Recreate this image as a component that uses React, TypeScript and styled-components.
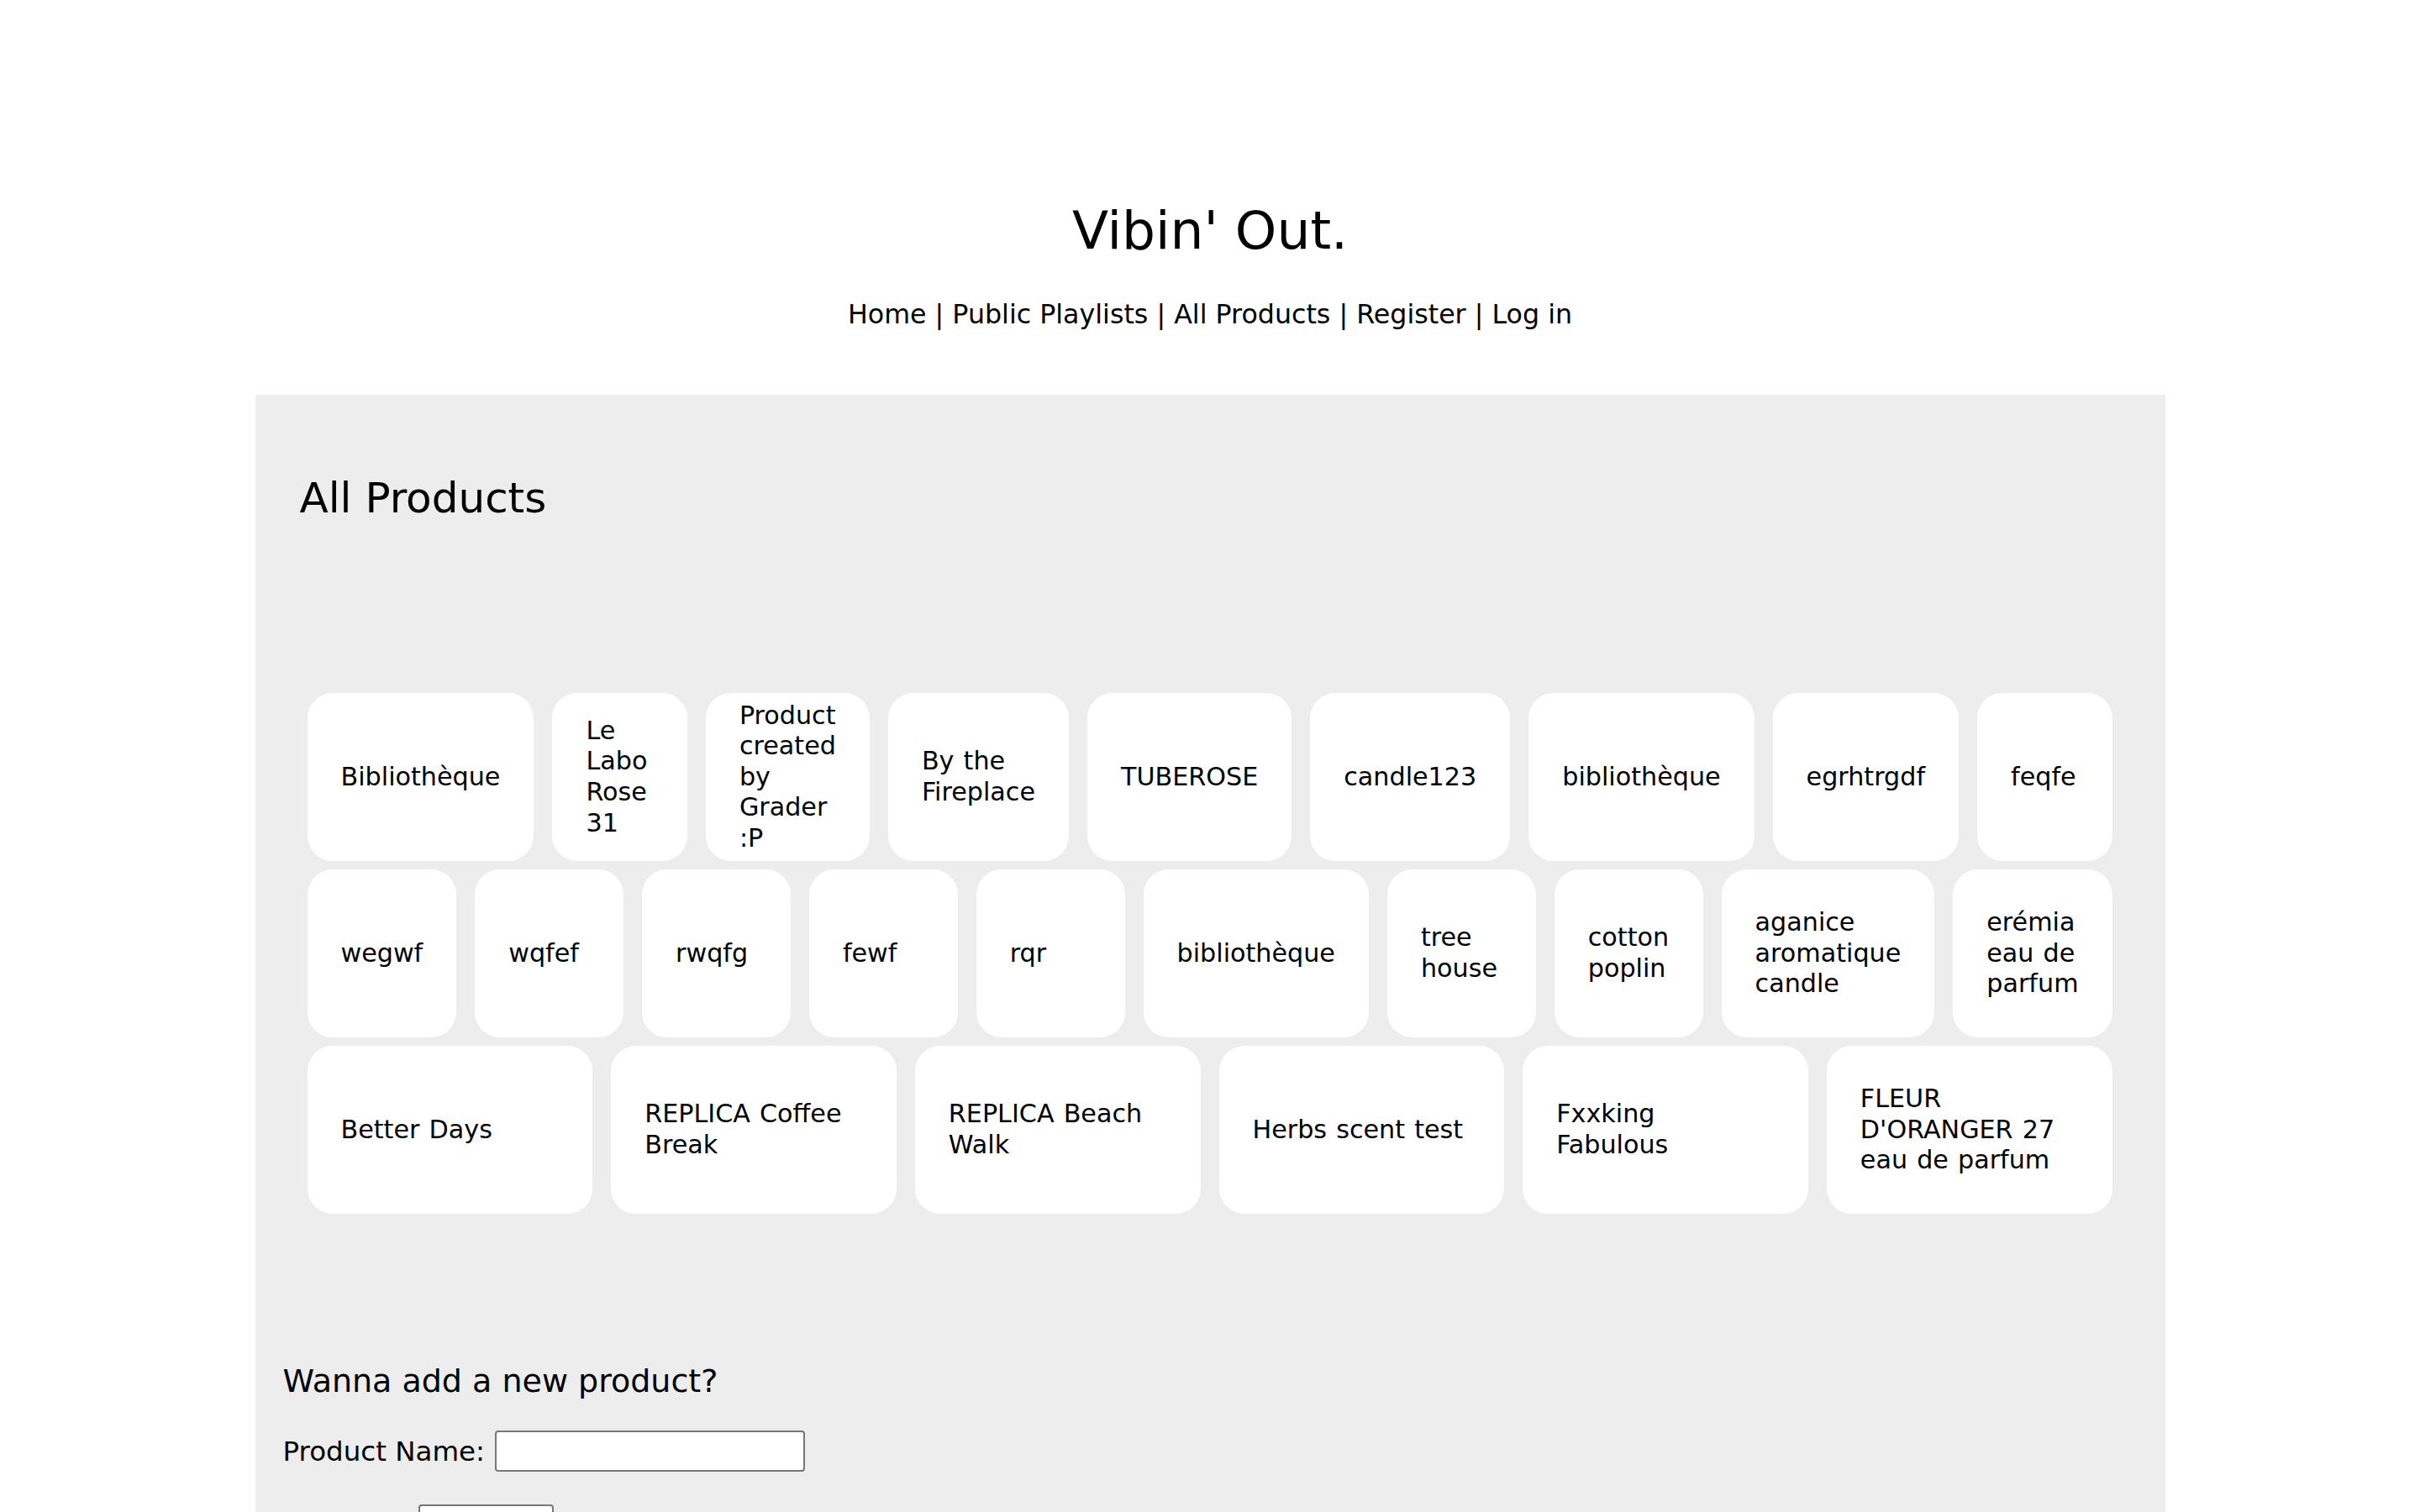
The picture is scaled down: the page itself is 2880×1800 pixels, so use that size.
import React from 'react';
import styled, { createGlobalStyle } from 'styled-components';

const GlobalStyle = createGlobalStyle`
  html, body {
    margin: 0;
    padding: 0;
    background: #fff;
  }
  body {
    font-family: "DejaVu Sans", "Liberation Sans", sans-serif;
    color: #000;
  }
`;

const Header = styled.header`
  padding-top: 237px;
  text-align: center;
`;

const Title = styled.h1`
  margin: 0;
  font-size: 63px;
  line-height: 76px;
  font-weight: 400;
`;

const Nav = styled.nav`
  margin-top: 42px;
  font-size: 31.7px;
  line-height: 38px;
`;

const NavLink = styled.a`
  color: inherit;
  text-decoration: none;
`;

const Panel = styled.main`
  width: 2273px;
  margin: 77px auto 0;
  padding: 93px 0 200px;
  background: #ededed;
`;

const SectionTitle = styled.h2`
  margin: 0 0 0 53px;
  font-size: 50px;
  line-height: 60px;
  font-weight: 400;
`;

const ProductGrid = styled.div`
  display: flex;
  flex-wrap: wrap;
  column-gap: 22px;
  row-gap: 10px;
  margin: 202px 63px 0 62px;
`;

const ProductCard = styled.div`
  flex: 1 1 0;
  height: 200px;
  padding: 0 40px;
  display: flex;
  align-items: center;
  background: #fff;
  border-radius: 30px;
  font-size: 30.2px;
  line-height: 36.6px;
  word-spacing: 1.5px;
`;

const AddSection = styled.section`
  margin-top: 176px;
  padding-left: 33px;
`;

const AddTitle = styled.h3`
  margin: 0 0 36px;
  font-size: 38px;
  line-height: 46px;
  font-weight: 400;
`;

const FieldRow = styled.label`
  display: flex;
  align-items: center;
  gap: 12px;
  font-size: 32.5px;
  line-height: 38px;

  & + & {
    margin-top: 39px;
  }
`;

const TextInput = styled.input<{ $width: number }>`
  box-sizing: border-box;
  width: ${(p) => p.$width}px;
  height: 49px;
  border: 2px solid #767676;
  border-radius: 4px;
  background: #fff;
`;

const products = [
  'Bibliothèque',
  'Le Labo Rose 31',
  'Product created by Grader :P',
  'By the Fireplace',
  'TUBEROSE',
  'candle123',
  'bibliothèque',
  'egrhtrgdf',
  'feqfe',
  'wegwf',
  'wqfef',
  'rwqfg',
  'fewf',
  'rqr',
  'bibliothèque',
  'tree house',
  'cotton poplin',
  'aganice aromatique candle',
  'erémia eau de parfum',
  'Better Days',
  'REPLICA Coffee Break',
  'REPLICA Beach Walk',
  'Herbs scent test',
  'Fxxking Fabulous',
  "FLEUR D'ORANGER 27 eau de parfum",
];

const links = ['Home', 'Public Playlists', 'All Products', 'Register', 'Log in'];

const App: React.FC = () => {
  return (
    <>
      <GlobalStyle />
      <Header>
        <Title>Vibin' Out.</Title>
        <Nav>
          {links.map((l, i) => (
            <React.Fragment key={l}>
              {i > 0 && ' | '}
              <NavLink href="#">{l}</NavLink>
            </React.Fragment>
          ))}
        </Nav>
      </Header>
      <Panel>
        <SectionTitle>All Products</SectionTitle>
        <ProductGrid>
          {products.map((p, i) => (
            <ProductCard key={i}>{p}</ProductCard>
          ))}
        </ProductGrid>
        <AddSection>
          <AddTitle>Wanna add a new product?</AddTitle>
          <FieldRow>
            Product Name:
            <TextInput type="text" $width={369} />
          </FieldRow>
          <FieldRow>
            Quantity:
            <TextInput type="text" $width={161} />
          </FieldRow>
        </AddSection>
      </Panel>
    </>
  );
};

export default App;
